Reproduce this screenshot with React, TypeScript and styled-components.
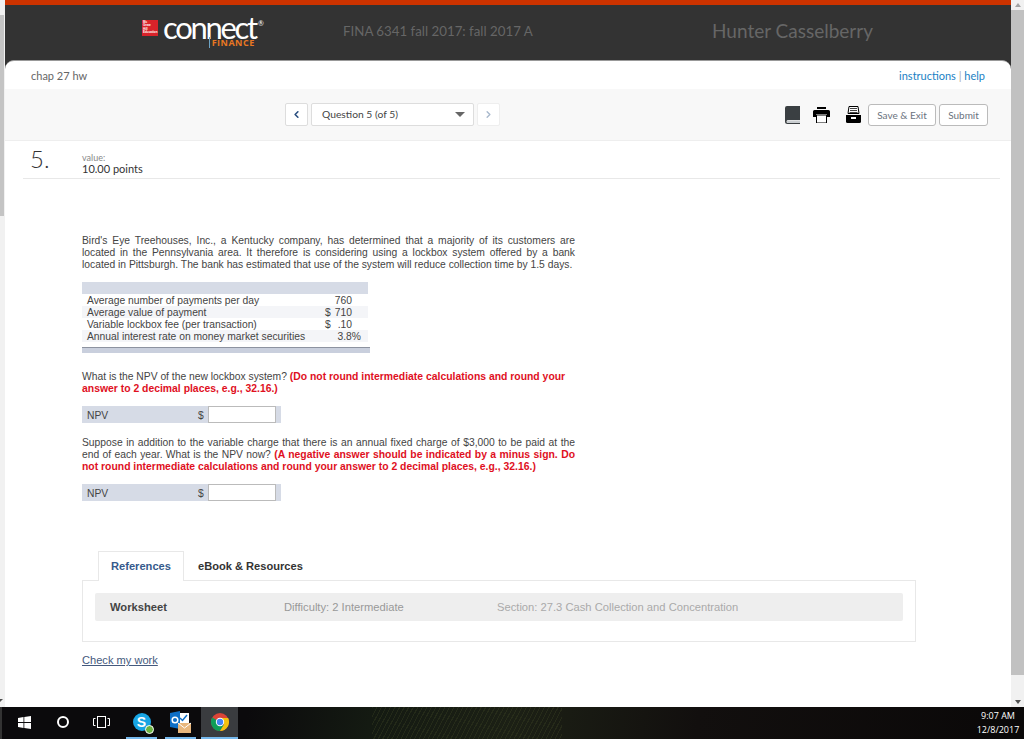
import React from "react";
import styled, { createGlobalStyle } from "styled-components";
import { ChevronLeft, ChevronRight } from "lucide-react";

const rows = [
  { label: "Average number of payments per day", sign: "", value: "760", pad: 16 },
  { label: "Average value of payment", sign: "$", value: "710", pad: 16 },
  { label: "Variable lockbox fee (per transaction)", sign: "$", value: ".10", pad: 16 },
  { label: "Annual interest rate on money market securities", sign: "", value: "3.8%", pad: 7 },
];

const NpvField = () => (
  <NpvRow>
    <NpvLabel>NPV</NpvLabel>
    <Dollar>$</Dollar>
    <NpvInput />
  </NpvRow>
);

const BookIcon = () => (
  <svg width="16" height="18" viewBox="0 0 16 18">
    <path d="M2 0h13v14H3a1 1 0 0 0 0 3h12v1H2.500A2.500 2.500 0 0 1 0 15.500V2a2 2 0 0 1 2-2z" fill="#3a3f42" />
    <rect x="2" y="14.500" width="13" height="2.500" fill="#c9cdd0" />
  </svg>
);

const PrintIcon = () => (
  <svg width="17" height="16" viewBox="0 0 17 16">
    <rect x="4" y="0" width="9" height="2" fill="#000" />
    <path d="M1.500 3h14A1.500 1.500 0 0 1 17 4.500V10h-3V7H3v3H0V4.500A1.500 1.500 0 0 1 1.500 3z" fill="#000" />
    <rect x="3.500" y="8" width="10" height="8" fill="#fff" stroke="#000" />
  </svg>
);

const SaveIcon = () => (
  <svg width="15" height="17" viewBox="0 0 15 17">
    <path d="M3 .5h9l1 7H2z" fill="#fff" stroke="#000" />
    <path d="M4 2.500h7M4 4.500h7M3.500 6.500h8" stroke="#444" />
    <path d="M0 9h15v6.500a1.500 1.500 0 0 1-1.500 1.500h-12A1.500 1.500 0 0 1 0 15.500z" fill="#000" />
    <rect x="5" y="11" width="5" height="2" fill="#fff" />
  </svg>
);

const WindowsIcon = () => (
  <svg width="13" height="13" viewBox="0 0 13 13">
    <path d="M0 2l5.500-.9v5H0zM6.300 1l6.700-1v6.100H6.300zM0 6.900h5.500v5L0 11zM6.300 6.900H13V13l-6.700-1z" fill="#fff" />
  </svg>
);

const TaskViewIcon = () => (
  <svg width="17" height="12" viewBox="0 0 17 12" fill="none" stroke="#fff">
    <rect x="4.500" y=".5" width="8" height="11" />
    <path d="M2.500 2.500H.5v7h2M14.500 2.500h2v7h-2" />
  </svg>
);

const OutlookIcon = () => (
  <svg width="21" height="22" viewBox="0 0 21 22">
    <rect x="8" y="2" width="11" height="11" fill="#fff" />
    <path d="M10 7l2.500 2.500L17 4" fill="none" stroke="#0f6fc6" strokeWidth="1.500" />
    <path d="M0 2l10-2v18L0 16z" fill="#0f6fc6" />
    <circle cx="5" cy="9" r="2.800" fill="none" stroke="#fff" strokeWidth="1.500" />
    <rect x="8" y="12" width="13" height="10" fill="#e8b77d" />
    <path d="M8 12l6.500 5 6.500-5" fill="none" stroke="#fff" />
  </svg>
);

const ChromeIcon = () => (
  <svg width="18" height="18" viewBox="0 0 18 18">
    <circle cx="9" cy="9" r="9" fill="#db4437" />
    <path d="M9 9L1.200 4.500A9 9 0 0 0 9 18l4-6z" fill="#0f9d58" />
    <path d="M9 5h8.100A9 9 0 0 1 9 18l4-6.500z" fill="#f4c20d" />
    <circle cx="9" cy="9" r="4.200" fill="#fff" />
    <circle cx="9" cy="9" r="3.200" fill="#4285f4" />
  </svg>
);

export default function App() {
  return (
    <>
      <GlobalStyle />
      <Screen>
        <Window>
          <LeftRail>
            <LeftThumb />
            <RailArrow />
          </LeftRail>
          <Main>
            <Header>
              <Logo>
                <LogoMark>
                  Mc
                  <br />
                  Graw
                  <br />
                  Hill
                  <br />
                  Education
                </LogoMark>
                <LogoWords>
                  <LogoName>
                    connect<LogoReg>®</LogoReg>
                  </LogoName>
                  <LogoSub>FINANCE</LogoSub>
                </LogoWords>
              </Logo>
              <CourseName>FINA 6341 fall 2017: fall 2017 A</CourseName>
              <UserName>Hunter Casselberry</UserName>
            </Header>
            <Page>
              <TitleBack>
                <TitleBar>
                  <AssignmentName>chap 27 hw</AssignmentName>
                  <HelpLinks>
                    instructions <HelpDivider>|</HelpDivider> help
                  </HelpLinks>
                </TitleBar>
              </TitleBack>
              <Toolbar>
                <Pager>
                  <NavButton>
                    <ChevronLeft size={11} strokeWidth={3.5} />
                  </NavButton>
                  <QuestionSelect>
                    Question 5 (of 5)
                    <SelectCaret />
                  </QuestionSelect>
                  <NavButton $disabled>
                    <ChevronRight size={11} strokeWidth={3} />
                  </NavButton>
                </Pager>
                <Actions>
                  <IconSlot $width={28}>
                    <BookIcon />
                  </IconSlot>
                  <IconSlot $width={33}>
                    <PrintIcon />
                  </IconSlot>
                  <IconSlot $width={19}>
                    <SaveIcon />
                  </IconSlot>
                  <ActionButton $width={68}>Save &amp; Exit</ActionButton>
                  <ActionButton $width={49}>Submit</ActionButton>
                </Actions>
              </Toolbar>
              <QuestionHead>
                <QuestionNumber>5.</QuestionNumber>
                <div>
                  <ValueLabel>value:</ValueLabel>
                  <Points>10.00 points</Points>
                </div>
              </QuestionHead>
              <Question>
                <Paragraph>
                  Bird's Eye Treehouses, Inc., a Kentucky company, has determined that a majority of its customers are located in the Pennsylvania area. It therefore is considering using a lockbox system offered by a bank located in Pittsburgh. The bank has estimated that use of the system will reduce collection time by 1.5 days.
                </Paragraph>
                <DataTable>
                  <TableCap />
                  {rows.map((row, i) => (
                    <DataRow key={row.label} $shaded={i % 2 === 1}>
                      <DataLabel>{row.label}</DataLabel>
                      <DataSign>{row.sign}</DataSign>
                      <DataValue $pad={row.pad}>{row.value}</DataValue>
                    </DataRow>
                  ))}
                  <TableFoot />
                </DataTable>
                <Prompt>
                  What is the NPV of the new lockbox system? <Warn>(Do not round intermediate calculations and round your answer to 2 decimal places, e.g., 32.16.)</Warn>
                </Prompt>
                <NpvField />
                <Paragraph $top={13}>
                  Suppose in addition to the variable charge that there is an annual fixed charge of $3,000 to be paid at the end of each year. What is the NPV now? <Warn>(A negative answer should be indicated by a minus sign. Do not round intermediate calculations and round your answer to 2 decimal places, e.g., 32.16.)</Warn>
                </Paragraph>
                <NpvField />
              </Question>
              <Tabs>
                <ActiveTab>References</ActiveTab>
                <Tab>eBook &amp; Resources</Tab>
              </Tabs>
              <TabPanel>
                <InfoBar>
                  <InfoTitle>Worksheet</InfoTitle>
                  <InfoDifficulty>Difficulty: 2 Intermediate</InfoDifficulty>
                  <InfoSection>Section: 27.3 Cash Collection and Concentration</InfoSection>
                </InfoBar>
              </TabPanel>
              <CheckLink>Check my work</CheckLink>
            </Page>
          </Main>
          <Scrollbar>
            <ArrowUp />
            <Thumb />
            <ArrowDown />
          </Scrollbar>
        </Window>
        <Taskbar>
          <TaskIcon $width={37}>
            <WindowsIcon />
          </TaskIcon>
          <TaskIcon $width={40}>
            <CortanaRing />
          </TaskIcon>
          <TaskIcon $width={36}>
            <TaskViewIcon />
          </TaskIcon>
          <TaskIcon $width={31} $gap={7} $running>
            <SkypeBadge>
              S<SkypeStatus />
            </SkypeBadge>
          </TaskIcon>
          <TaskIcon $width={31} $gap={8} $running>
            <OutlookIcon />
          </TaskIcon>
          <TaskIcon $width={37} $gap={5} $running $active>
            <ChromeIcon />
          </TaskIcon>
          <Clock>
            <div>9:07 AM</div>
            <div>12/8/2017</div>
          </Clock>
        </Taskbar>
      </Screen>
    </>
  );
}

const GlobalStyle = createGlobalStyle`
  html, body {
    margin: 0;
    padding: 0;
    background: #fff;
    overflow: hidden;
  }
  * {
    box-sizing: border-box;
  }
`;

const Screen = styled.div`
  width: 1024px;
  height: 739px;
  display: flex;
  flex-direction: column;
  font-family: "Liberation Sans", Arial, sans-serif;
  overflow: hidden;
`;

const Window = styled.div`
  flex: 1;
  min-height: 0;
  display: flex;
`;

const LeftRail = styled.div`
  width: 5px;
  padding: 15px 0 5px;
  background: #f1f1f1;
  display: flex;
  flex-direction: column;
`;

const LeftThumb = styled.div`
  width: 4px;
  height: 201px;
  margin-bottom: auto;
  background: #c4c4c4;
`;

const RailArrow = styled.span`
  width: 0;
  border-top: 3px solid #505050;
  border-right: 3px solid transparent;
`;

const Main = styled.div`
  flex: 1;
  min-width: 0;
  display: flex;
  flex-direction: column;
`;

const Header = styled.header`
  height: 60px;
  flex-shrink: 0;
  background: #333;
  border-top: 5px solid #cc3300;
  display: flex;
  align-items: center;
  padding: 0 0 4px 137px;
  font-family: "Lato", "Open Sans", sans-serif;
`;

const Logo = styled.div`
  width: 201px;
  align-self: flex-start;
  display: flex;
  align-items: flex-start;
  gap: 5px;
  margin-top: 13px;
`;

const LogoMark = styled.div`
  width: 16px;
  height: 16px;
  margin-top: 2px;
  padding: 1px 0 0 1px;
  background: #d8232a;
  color: #fff;
  font-family: "Liberation Sans", sans-serif;
  font-weight: bold;
  font-size: 3px;
  line-height: 3.400px;
  overflow: hidden;
`;

const LogoWords = styled.div`
  display: flex;
  flex-direction: column;
  align-items: flex-end;
`;

const LogoName = styled.div`
  height: 19px;
  color: #fff;
  font-size: 31px;
  font-weight: 400;
  line-height: 19px;
  letter-spacing: -2.300px;
`;

const LogoReg = styled.span`
  position: relative;
  top: -13px;
  left: 2px;
  font-size: 7px;
  letter-spacing: 0;
`;

const LogoSub = styled.div`
  margin-right: 7px;
  padding-left: 2px;
  border-left: 1px solid #6ea3c4;
  color: #e87722;
  font-family: "Open Sans", sans-serif;
  font-size: 9px;
  font-weight: 700;
  line-height: 11px;
  letter-spacing: 0.500px;
`;

const CourseName = styled.div`
  width: 369px;
  color: #666;
  font-size: 13.300px;
`;

const UserName = styled.div`
  color: #666;
  font-size: 19px;
`;

const Page = styled.main`
  flex: 1;
  min-height: 0;
  background: #fff;
`;

const TitleBack = styled.div`
  background: #333;
`;

const TitleBar = styled.div`
  height: 29px;
  background: #fff;
  border-top: 1px solid #999;
  border-radius: 9px 9px 0 0;
  display: flex;
  align-items: center;
  justify-content: space-between;
  padding: 0 26px 0 26px;
  font-family: "Lato", "Open Sans", sans-serif;
  font-size: 11px;
`;

const AssignmentName = styled.span`
  color: #666;
`;

const HelpLinks = styled.span`
  color: #1a7fc4;
`;

const HelpDivider = styled.span`
  color: #aaa;
`;

const Toolbar = styled.div`
  height: 52px;
  background: #f8f8f8;
  border-bottom: 1px solid #eee;
  display: flex;
  align-items: center;
  justify-content: space-between;
  padding: 0 23px 0 280px;
  font-family: "Lato", "Open Sans", sans-serif;
`;

const Pager = styled.div`
  display: flex;
  gap: 3px;
  margin-top: -1px;
`;

const NavButton = styled.div<{ $disabled?: boolean }>`
  width: 23px;
  height: 23px;
  background: #fff;
  border: 1px solid ${(p) => (p.$disabled ? "#eee" : "#ddd")};
  border-radius: 2px;
  color: ${(p) => (p.$disabled ? "#a8b8cc" : "#2a4f80")};
  display: flex;
  align-items: center;
  justify-content: center;
`;

const QuestionSelect = styled.div`
  width: 163px;
  height: 23px;
  background: #fff;
  border: 1px solid #ddd;
  border-radius: 2px;
  display: flex;
  align-items: center;
  justify-content: space-between;
  padding: 0 8px 0 10px;
  color: #444;
  font-size: 10.300px;
`;

const SelectCaret = styled.span`
  width: 0;
  height: 0;
  border-left: 5px solid transparent;
  border-right: 5px solid transparent;
  border-top: 5px solid #666;
`;

const Actions = styled.div`
  display: flex;
  align-items: center;
`;

const IconSlot = styled.div<{ $width: number }>`
  width: ${(p) => p.$width}px;
  display: flex;
  justify-content: flex-start;
  align-items: center;
`;

const ActionButton = styled.div<{ $width: number }>`
  width: ${(p) => p.$width}px;
  height: 22px;
  margin-left: 3px;
  background: #fff;
  border: 1px solid #bbb;
  border-radius: 3px;
  color: #6b7380;
  font-size: 10px;
  line-height: 20px;
  text-align: center;
`;

const QuestionHead = styled.div`
  height: 38px;
  margin: 0 11px 0 18px;
  border-bottom: 1px solid #e8e8e8;
  display: flex;
  font-family: "Lato", "Open Sans", sans-serif;
`;

const QuestionNumber = styled.div`
  width: 59px;
  padding: 4px 0 0 7px;
  color: #333;
  font-size: 24px;
  font-weight: 300;
  line-height: 27px;
`;

const ValueLabel = styled.div`
  margin-top: 11px;
  color: #888;
  font-size: 9px;
  line-height: 11px;
`;

const Points = styled.div`
  color: #333;
  font-size: 11px;
  line-height: 12px;
`;

const Question = styled.section`
  width: 493px;
  margin: 55px 0 0 77px;
  color: #444;
  font-size: 10.300px;
  line-height: 12px;
`;

const Paragraph = styled.p<{ $top?: number }>`
  margin: ${(p) => p.$top ?? 0}px 0 -1px;
  padding-top: 1px;
  text-align: justify;
`;

const DataTable = styled.div`
  width: 286px;
  margin-top: 12px;
`;

const TableCap = styled.div`
  height: 12px;
  background: #d6dbe6;
`;

const DataRow = styled.div<{ $shaded: boolean }>`
  height: 12px;
  display: flex;
  padding: 1px 0 0 5px;
  background: ${(p) => (p.$shaded ? "#f4f5f8" : "#fff")};
`;

const DataLabel = styled.div`
  width: 238px;
  white-space: nowrap;
`;

const DataSign = styled.div`
  width: 8px;
`;

const DataValue = styled.div<{ $pad: number }>`
  width: 35px;
  padding-right: ${(p) => p.$pad}px;
  text-align: right;
  white-space: nowrap;
`;

const TableFoot = styled.div`
  width: 288px;
  height: 6px;
  margin-top: 5px;
  background: #c9cfdd;
  border-top: 1px solid #8d93a0;
`;

const Prompt = styled.p`
  margin: 17px 0 -1px;
  padding-top: 1px;
  width: 486px;
`;

const Warn = styled.strong`
  color: #e0101e;
  font-size: 10.400px;
`;

const NpvRow = styled.div`
  width: 199px;
  height: 17px;
  margin-top: 12px;
  background: #d6dbe6;
  display: flex;
  align-items: center;
`;

const NpvLabel = styled.span`
  width: 116px;
  padding: 2px 0 0 5px;
`;

const Dollar = styled.span`
  width: 10px;
  padding-top: 2px;
`;

const NpvInput = styled.div`
  width: 68px;
  height: 17px;
  background: #fff;
  border: 1px solid #bbb;
`;

const Tabs = styled.div`
  height: 29px;
  margin: 50px 0 0 93px;
  display: flex;
  font-size: 11.100px;
  font-weight: bold;
`;

const ActiveTab = styled.div`
  width: 86px;
  height: 30px;
  position: relative;
  background: #fff;
  border: 1px solid #e8e8e8;
  border-bottom: 0;
  color: #365a8c;
  line-height: 29px;
  text-align: center;
`;

const Tab = styled.div`
  padding-left: 14px;
  color: #333;
  line-height: 31px;
`;

const TabPanel = styled.div`
  width: 834px;
  height: 62px;
  margin-left: 77px;
  padding: 12px 12px 0;
  border: 1px solid #e8e8e8;
`;

const InfoBar = styled.div`
  height: 28px;
  padding-left: 15px;
  background: #eee;
  border-radius: 2px;
  display: flex;
  align-items: center;
  font-size: 11.200px;
  color: #999;
`;

const InfoTitle = styled.span`
  width: 174px;
  color: #444;
  font-weight: bold;
`;

const InfoDifficulty = styled.span`
  width: 213px;
`;

const InfoSection = styled.span`
  color: #aaa;
`;

const CheckLink = styled.a`
  display: block;
  margin: 12px 0 0 77px;
  color: #44597d;
  font-size: 11.100px;
  text-decoration: underline;
`;

const Scrollbar = styled.div`
  width: 13px;
  background: #f1f1f1;
  display: flex;
  flex-direction: column;
  align-items: center;
  padding: 3px 0;
`;

const ArrowUp = styled.span`
  border-left: 3px solid transparent;
  border-right: 3px solid transparent;
  border-bottom: 4px solid #a3a3a3;
`;

const ArrowDown = styled.span`
  border-left: 3px solid transparent;
  border-right: 3px solid transparent;
  border-top: 4px solid #505050;
`;

const Thumb = styled.div`
  width: 13px;
  height: 665px;
  margin: 3px 0 auto;
  background: #c1c1c1;
`;

const Taskbar = styled.footer`
  height: 32px;
  flex-shrink: 0;
  display: flex;
  align-items: stretch;
  padding-left: 4px;
  background:
    repeating-linear-gradient(118deg, rgba(70, 78, 40, 0.28) 0 1px, transparent 1px 4px) 370px 0 / 190px 100% no-repeat,
    linear-gradient(100deg, #0b0a0c 0%, #0b0a0c 24%, #141a12 36%, #1c2015 50%, #120f0e 68%, #0a0808 100%);
  border-left: 2px solid #333;
`;

const TaskIcon = styled.div<{ $width: number; $gap?: number; $running?: boolean; $active?: boolean }>`
  width: ${(p) => p.$width}px;
  margin-left: ${(p) => p.$gap ?? 0}px;
  display: flex;
  align-items: center;
  justify-content: center;
  background: ${(p) => (p.$active ? "#3a3c3f" : "transparent")};
  border-bottom: 2px solid ${(p) => (p.$running ? "#76b9ed" : "transparent")};
`;

const CortanaRing = styled.span`
  width: 12px;
  height: 12px;
  border: 2px solid #fff;
  border-radius: 50%;
`;

const SkypeBadge = styled.span`
  width: 18px;
  height: 18px;
  position: relative;
  background: #18a5e4;
  border-radius: 50%;
  color: #fff;
  font-size: 14px;
  font-weight: bold;
  line-height: 18px;
  text-align: center;
`;

const SkypeStatus = styled.span`
  width: 9px;
  height: 9px;
  position: absolute;
  right: -3px;
  bottom: -3px;
  background: #6cb33f;
  border: 1px solid #fff;
  border-radius: 50%;
`;

const Clock = styled.div`
  margin-left: auto;
  margin-right: 1px;
  width: 50px;
  padding-top: 2px;
  color: #fff;
  font-family: "Open Sans", sans-serif;
  font-size: 9px;
  line-height: 14px;
  text-align: center;
  white-space: nowrap;
`;
